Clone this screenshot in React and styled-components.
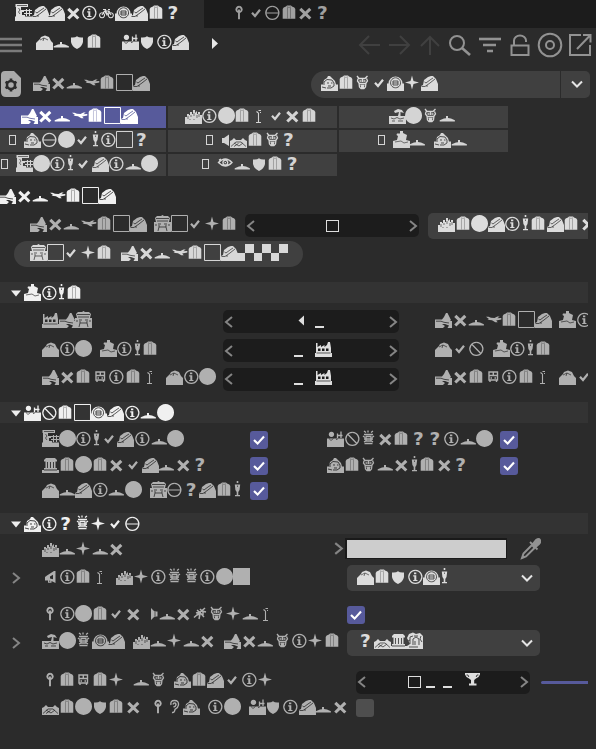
import React from 'react';
import styled, { createGlobalStyle } from 'styled-components';

const EM = 16.62;

// f: filled, s: stroked, k: lines cut out, kf: areas cut out, w: advance
const GLYPHS = {
  A: { f: 'M0.5 0H13V3H6V6H9V8H7V11H10V12.5H17V17H0V12.5H1V3H0.5Z', s: 'M9 6.5H17M9 9.5H17M11.5 5V12M14.5 5V12', k: 'M2 1.5H12M3.5 4L5 6L3.5 8L5 10' },
  B: { f: 'M0 6L2 2L6 0.5L9 2L13 1L16 4V17H0V14L3 12Z', k: 'M3 12V5L6 4M6 13V7L9 5L12 7V13M14 4L13 7L15 10M8 9V13M1 9L3 8M7 4H11M2 15H11', kw: 0.9 },
  C: { f: 'M0 10H2V7H4V8H5V5H7V7H8V3H10V6L12 4V7H13V5H15V8H17V17H0Z', k: 'M3 9V12M6 8V10M9 6V9M12 8V11M14 7V10M5 12V13M9 12V13' },
  D: { f: 'M0 10.5H2L3 6L6 4L7 2H9L12 5L14 7L15 10.5H17V17H0Z', k: 'M3 11V8L6 5.5L11 6L13 9V12L10 14H6M6 9H8M10 9H11.5M7 12H10M1 13L5 14', kw: 0.9 },
  E: { f: 'M0 8.5H17V17H0Z M4.4 1.7A2.7 2.7 0 1 0 4.5 1.7Z', s: 'M10.5 8V3.5M14 8V1.5M10.5 5.5H15.5', sw: 1.3, k: 'M2 8.5L4 10.5L6.5 8.5M9 9.5H10.5' },
  F: { f: 'M1 8V3H2.5V7L6 5V7L9.5 5V7L12 5L13 2H15L16 8V13H17V17H0V13H1Z', kf: 'M3 8.5H5.5V11H3ZM7 8.5H9.5V11H7ZM11 8.5H13.5V11H11Z', k: 'M1.5 13H15.5' },
  G: { f: 'M2 4L4 2H13L15 4V5.5H13.5V12H15V14H17V17H0V14H2V12H3.5V5.5H2Z', k: 'M5.5 6V12M8.5 6V12M11.5 6V12M2 14H15', kw: 0.9 },
  I: { f: 'M0 9H9L10 5L6 6L5 4L9 2L13 3L15 6L11.5 5V9H17V17H0Z', k: 'M2 11L5 12L8 10.5L11 12L15 11M3 14H6M9 14H14', kw: 0.8 },
  L: { s: 'M8 2.8A2.7 2.7 0 1 0 8.1 2.8M8 5.5V15.3', sw: 1.9 },
  M: { f: 'M0 10L4 6L5 4L9 2.5L13 4L15 8L17 10V17H0Z', k: 'M4 7L8 5L12 7M8 5L7 8' },
  N: { s: 'M1.5 7.5Q8.3 0.5 15 7.5Q8.3 14.5 1.5 7.5ZM8.3 5.2A2.4 2.4 0 1 0 8.4 5.2M8.3 7V8.2M2 5L4 4', sw: 1.4 },
  O: { s: 'M5 7Q4 2.5 8.5 2.5Q13 2.5 12.5 7Q12 10 9 11.5Q8.5 15 6 14.5M7 6.5Q7.5 4.5 9.5 5.2Q10.7 6.5 9 8.5L7.5 9', sw: 1.4 },
  P: { f: 'M0 8.5H7L9 6L11 2H12.5L16 9L15 10H17V17H12.5L14 14.5L10 13H7L10 15L8 17H0Z', k: 'M1 10.2H6L9 11.3L14 12', kw: 0.8 },
  R: { f: 'M0 10L2 9L4 7L6 9H11L13 7L15 9L17 10V17H0Z', k: 'M1 15.5L6 11H11L16 15.5M4 12L9 15L13 12M4 15.5L8.5 12.5', kw: 0.8 },
  S: { f: 'M3 1L7 1L8.5 0L10 1L14 1L16 3L15 7H17V17H0V7H2L1 3Z', k: 'M2 3.5H15M3 6H14M5 8V12L4 16M12 8V12L13 16M5 12H12M6 9H7M10 9H11M1 10H3M14 10H16', kw: 0.8 },
  T: { f: 'M4 2.5H7V0H10V2L14 4L13 9L17 10V17H0V10L4 9L5 5L3.5 4Z', k: 'M2 11L8 10L11 12L15 11' },
  V: { f: 'M3 9L5 7.5L12 3H13.5V15L9.5 13V14.7H6V12.5H3Z', kf: 'M8 8.6L11 6.8V11.2L8 10.4Z', k: 'M7.7 12.5V14' },
  W: { f: 'M1 3L4.5 6.5H7.5V11.5H4.5L1 15Z', k: 'M5 7V11', w: 9 },
  X: { f: 'M1 7H3L8 3.5V15L3 12H1Z', w: 9 },
  a: { s: 'M4 8.8L7 12L12 5.8', sw: 2.2 },
  b: { s: 'M4 8.8A2.5 2.5 0 1 0 4.1 8.8M12.8 8.8A2.5 2.5 0 1 0 12.9 8.8M4 11L6.5 7H11L13 11M6.5 7L9 11L11 7M5 5.5H7.5L9 11M10 5.5H12' },
  c: { s: 'M0.5 0.5H16.5V16.5H0.5Z', sw: 1 },
  d: { f: 'M2 4.5Q6 5 8 3.2Q10 5 14 4.5V9Q13 14 8 16Q3 14 2 9Z' },
  e: { f: 'M1.7 14.7V5Q2 3 5 2.5L6 1.5H10L11 2.5Q14 3 14.3 5V14.7Z', k: 'M6.5 3.5V14.5M9.5 3.5V14.5M6 2.7L8 3.5L10 2.7', kw: 0.35 },
  f: { s: 'M3 2L5 4.5H11L13.5 2M4 4.5L3.5 7L5 9L5.5 13L7 14.5H10L11.5 13L12 9L13.5 7L12.5 4.5M5.5 7H7.5M9.5 7H11.5M5 9.5H12M6.5 11.5H10.5M8.5 5V8M7 13H10', sw: 1.3 },
  g: { f: 'M0 0H17V17H0Z' },
  i: { s: 'M8.3 2.4A6.5 6.5 0 1 0 8.4 2.4', f: 'M6.2 7.3H9.3V12H10.5V13.1H6.2V12H7.3V8.4H6.2Z M7 4.4H9.3V6.3H7Z', sw: 1.25 },
  j: { f: 'M1 5.7L3.5 5.7L6 6.8L9.5 7L12.5 5.5H14.7L12.3 7.2L16.3 7V8.6L11.2 9.4L12.7 11.3H10.3L7 9.2L2.5 8.8L4 8Z' },
  k: { s: 'M2 12.5L6 9L13 3M5 5L8 7.5L12 12M4 8L8 7M8 4L10 6L14 7M7 14L8 9L5 10M11 6V10', sw: 1.5 },
  l: { f: 'M8 1.5L9.5 7L15 8.5L9.5 10L8 15.5L6.5 10L1 8.5L6.5 7Z' },
  m: { f: 'M3.7 0H5.3V2H3.7ZM1.8 3.5H7.2L6.5 9L5.3 11V14H7V15.3H2V14H3.7V11L2.4 9Z', k: 'M4.5 4.5V6', w: 9 },
  n: { f: 'M8.5 0A8.5 8.5 0 1 0 8.6 0Z' },
  o: { f: 'M0.7 14.4V13.3L5 11.6L7 11.3V9H9V11L12 11.6L15.9 13.3V14.4Z' },
  p: { s: 'M4 1L6 2.5M8 0.5V2.5M13 1L11 2.5M4 4.5H13M5.5 6.5H11.5M4 9H13M5.5 11H11.5M4.5 13.5H12.5M3 6L5 7.5M14 6L12 7.5M4 12L5.5 11M13 12L11.5 11M6 7V11M11 7V11', sw: 1.3 },
  r: { s: 'M3.3 4.8L13.3 14.5M13.3 4.8L3.3 14.5', sw: 3.1 },
  t: { f: 'M0 17V12L2 11L3 6L7 3L10 2H12L15 5L17 10V17Z', k: 'M0.5 12.5H4L9 9L14 5M3.5 8L5 9L9 6L12 4M5 12H7', kw: 0.8 },
  u: { f: 'M0 9.5H1.5A7 7 0 0 1 15.5 9.5H17V17H0Z', k: 'M8.5 3.8A5 5 0 1 0 8.6 3.8M6 7H11V11H6ZM6 9H11', kw: 0.9 },
  v: { s: 'M4 4H12.5V12H4ZM4 7.5H12.5M8.3 4V7.5M5.5 10H7M9.5 10H11M5 12V14M11.5 12V14', sw: 1.4 },
  w: { s: 'M7.5 6V15M5 15.5H10M5.5 4.5L7.5 6M7.5 3.5H10M9 5.5H10' },
  x: { s: 'M8.3 2.4A6.5 6.5 0 1 0 8.4 2.4M3.8 4.2L12.8 13.5', sw: 1.25 },
  y: { s: 'M8.3 2.4A6.5 6.5 0 1 0 8.4 2.4M2 9H14.8', sw: 1.25 },
  '0': { f: 'M4 15H13V17H4Z' },
  '1': { s: 'M2.5 5.5H14.5V16.5H2.5Z', sw: 1.3, crisp: true },
  '3': { f: 'M10 4.5V14.5L4.5 9.5Z' },
  '%': { f: 'M1 2H16V3.5L14.5 6L12 7.5L10.2 9V12.5H12.5V14.5H5V12.5H7V9L5 7.5L2.5 6L1 3.5Z', k: 'M2.5 4H4L4.8 6M14.5 4H13L12.2 6', kw: 0.8 },
  '.': { f: 'M0 8.5H8.5V17H0ZM8.5 0H17V8.5H8.5Z', crisp: true },
  '|': { s: 'M1.5 4.5H7.5V13.5H1.5Z', sw: 1, w: 8, crisp: true },
};

const Glyph = ({ ch }) => {
  if (ch === ' ') return <Space />;
  if (ch === 's') return <Mark>?</Mark>;
  const g = GLYPHS[ch];
  return (
    <Sign $w={g.w || EM} viewBox={`0 0 ${g.w || EM} 17`} shapeRendering={g.crisp ? 'crispEdges' : undefined}>
      {g.f && <path d={g.f} fill='currentColor' />}
      {g.s && <path d={g.s} fill='none' stroke='currentColor' strokeWidth={g.sw || 1.1} />}
      {g.kf && <path d={g.kf} fill='var(--cut)' />}
      {g.k && <path d={g.k} fill='none' stroke='var(--cut)' strokeWidth={g.kw || 0.7} />}
    </Sign>
  );
};

const Word = ({ text, ...rest }) => (
  <WordWrap {...rest}>
    {text.split('').map((ch, i) => <Glyph ch={ch} key={i} />)}
  </WordWrap>
);

const Chevron = ({ dir = 'right', size = 12, color = '#858585', weight = 2 }) => {
  const d = { right: 'M3 1L9 6L3 11', left: 'M9 1L3 6L9 11', down: 'M1 3.5L6 8.5L11 3.5' }[dir];
  return (
    <svg width={size} height={size} viewBox='0 0 12 12'>
      <path d={d} fill='none' stroke={color} strokeWidth={weight} />
    </svg>
  );
};

const NumberField = ({ text, width }) => (
  <Field $w={width}>
    <Chevron dir='left' />
    <Word text={text} />
    <Chevron />
  </Field>
);

const Check = ({ on }) => (
  <CheckBox $on={on}>
    {on && (
      <svg width='14' height='14' viewBox='0 0 14 14'>
        <path d='M2 7L5.6 10.6L12 3.5' fill='none' stroke='#fff' strokeWidth='2.1' />
      </svg>
    )}
  </CheckBox>
);

const Section = ({ text }) => (
  <SectionBar>
    <svg width='10' height='9' viewBox='0 0 10 9'><path d='M0 2.5H10L5 8.5Z' fill='#eee' /></svg>
    <Word text={text} $lift={1} />
  </SectionBar>
);

const Toolbar = () => (
  <Tools>
    <svg width='240' height='28' viewBox='0 0 240 28' fill='none' stroke='#929292' strokeWidth='2'>
      <g stroke='#404040'>
        <path d='M24 14H4M13 5L4 14L13 23' />
        <path d='M33 14H53M44 5L53 14L44 23' />
        <path d='M74 24V6M65 15L74 6L83 15' />
      </g>
      <circle cx='101' cy='12' r='7' />
      <path d='M106 17L114 24' strokeWidth='2.6' />
      <path d='M123 8H145' strokeWidth='2.6' /><path d='M127 14H140M131 20H137' strokeWidth='2.4' />
      <path d='M155.5 14.5H172.5V24H155.5ZM158 14V9.5A6 5 0 0 1 170 9.5V11' />
      <circle cx='194' cy='14' r='11.3' />
      <circle cx='194' cy='14' r='4' />
      <path d='M225 4H214V24H234V14M227 4H234.5V11.5M234 4.5L221 18' />
    </svg>
  </Tools>
);

const App = () => (
  <>
    <GlobalStyle />
    <Panel>
      <TabBar>
        <PanelTab $w={204} $active><Word text='Attributes' $lift={3} /></PanelTab>
        <PanelTab $w={392}><Word text='Layers' $lift={3} /></PanelTab>
      </TabBar>
      <MenuBar>
        <svg width='22' height='16' viewBox='0 0 22 16'>
          <path d='M0 2H22M0 8H22M0 14H22' stroke='#7b7b7b' strokeWidth='2.4' />
        </svg>
        <MenuItem $left={14}><Word text='Mode' $lift={8} /></MenuItem>
        <MenuItem $left={20}><Word text='Edit' $lift={8} /></MenuItem>
        <MenuItem $left={23}><MenuArrow width='6' height='11' viewBox='0 0 6 11'><path d='M0 0L6 5.5L0 11Z' fill='#e8e8e8' /></MenuArrow></MenuItem>
        <Toolbar />
      </MenuBar>
      <ObjectBar>
        <svg width='22' height='28' viewBox='0 0 22 28'>
          <path d='M5 1H14L21 8V22Q21 27 16 27H6Q1 27 1 22V5Q1 1 5 1Z' fill='#aaa' />
          <circle cx='11' cy='15' r='4' fill='none' stroke='#2b2b2b' strokeWidth='2.5' />
          <path d='M11 8.5V11M11 19V21.5M5.5 11.8L7.6 13M14.4 17L16.5 18.2M5.5 18.2L7.6 17M14.4 13L16.5 11.8' stroke='#2b2b2b' strokeWidth='2.6' />
        </svg>
        <ObjectName><Word text='Project' $lift={4} /></ObjectName>
        <Preset><Word text='Default' $lift={4} /></Preset>
        <PresetArrow><Chevron dir='down' color='#e4e4e4' /></PresetArrow>
      </ObjectBar>
      <Categories>
        <Category $active><Word text='Project' $lift={4} /></Category>
        <Category><Word text='Cineware' $lift={4} /></Category>
        <Category><Word text='Info' $lift={4} /></Category>
        <Category><Word text='| Dynamics' $lift={4} /></Category>
        <Category><Word text='| XRefs' $lift={4} /></Category>
        <Category><Word text='| To Do' $lift={4} /></Category>
        <Category><Word text='| Animation' $lift={4} /></Category>
        <Category><Word text='| Nodes' $lift={4} /></Category>
      </Categories>
      <Scroller>
        <Heading><Word text='Project' /></Heading>
        <Row $h={31} $left={30}>
          <Label $w={215}><Word text='Project Scale' /></Label>
          <NumberField width={174} text='1' />
          <UnitSelect><Word text='Centimeter' /></UnitSelect>
        </Row>
        <PillButton><Word text='Scale Project...' $lift={4} /></PillButton>

        <Section text='Time' />
        <Group $after={9}>
          <Row $h={29}>
            <Label $w={181}><Word text='FPS' /></Label>
            <NumberField width={176} text='30' />
            <Label $left={36}><Word text='Project Time' /></Label>
          </Row>
          <Row $h={29}>
            <Label $w={181}><Word text='Min Time' /></Label>
            <NumberField width={176} text='0 F' />
            <Label $left={36}><Word text='Max Time' /></Label>
          </Row>
          <Row $h={28}>
            <Label $w={181}><Word text='Preview Min' /></Label>
            <NumberField width={176} text='0 F' />
            <Label $left={36}><Word text='Preview Max' /></Label>
          </Row>
        </Group>

        <Section text='Execution' />
        <Group $after={9}>
          <Row $h={26}>
            <Label $w={208}><Word text='Animation' $lift={3} /></Label>
            <Check on />
            <Label $w={173} $left={59}><Word text='Expression' $lift={3} /></Label>
            <Check on />
          </Row>
          <Row $h={25}>
            <Label $w={208}><Word text='Generators' $lift={3} /></Label>
            <Check on />
            <Label $w={173} $left={59}><Word text='Deformers' $lift={3} /></Label>
            <Check on />
          </Row>
          <Row $h={26}>
            <Label $w={208}><Word text='Motion System' $lift={3} /></Label>
            <Check on />
          </Row>
        </Group>

        <Section text='Display' />
        <Row $h={29}>
          <Label $w={290}><Word text='Color' $lift={0} /></Label>
          <Chevron size={13} />
          <Swatch />
          <Dropper width='21' height='22' viewBox='0 0 21 22'>
            <path d='M12 7L3.5 15.5L2 20L6 18.5L14.5 10' fill='none' stroke='#929292' strokeWidth='2' />
            <path d='M10 4L17.5 11.5M12 7L16 2Q19 0 20 2Q21 4 19 6L14.5 10Z' fill='#929292' stroke='#929292' strokeWidth='1.8' />
          </Dropper>
        </Row>
        <Row $h={30} $left={10}>
          <Chevron />
          <Label $w={305} $left={20}><Word text='View Clipping' $lift={3} /></Label>
          <Select><Word text='Medium' $lift={4} /><Chevron dir='down' color='#e4e4e4' /></Select>
        </Row>
        <Row $h={28} $before={8}>
          <Label $w={305}><Word text='Linear Workflow' $lift={3} /></Label>
          <Check on />
        </Row>
        <Row $h={28} $left={10}>
          <Chevron />
          <Label $w={305} $left={20}><Word text='Input Color Profile' /></Label>
          <Select><Word text='sRGB' /><Chevron dir='down' color='#e4e4e4' /></Select>
        </Row>
        <Row $h={28} $before={11}>
          <Label $w={314}><Word text='Level of Detail' /></Label>
          <NumberField width={174} text='100 %' />
          <Track />
        </Row>
        <Row $h={24}>
          <Label $w={314}><Word text='Render LOD in Editor' $lift={3} /></Label>
          <Check />
        </Row>
      </Scroller>
    </Panel>
  </>
);

export default App;

const GlobalStyle = createGlobalStyle`
  * {
    box-sizing: border-box;
  }
  body {
    margin: 0;
    background: #2b2b2b;
    overflow: hidden;
  }
  svg {
    display: block;
    flex: none;
  }
`;
const Panel = styled.div`
  --cut: #2b2b2b;
  width: 596px;
  height: 749px;
  overflow: hidden;
  background: #2b2b2b;
  color: #b0b0b0;
  font-family: 'Liberation Sans', Arial, sans-serif;
`;
const WordWrap = styled.span`
  display: flex;
  flex: none;
  box-sizing: content-box;
  height: 17px;
  padding-bottom: ${props => props.$lift ?? 5}px;
`;
const Sign = styled.svg`
  width: ${props => props.$w}px;
  height: 17px;
  overflow: visible;
`;
const Space = styled.span`
  width: 8px;
`;
const Mark = styled.span`
  width: ${EM}px;
  height: 17px;
  text-align: center;
  font: bold 18.5px/18px 'DejaVu Sans', sans-serif;
`;
const TabBar = styled.div`
  display: flex;
  height: 28px;
`;
const PanelTab = styled.div`
  --cut: ${props => props.$active ? '#2b2b2b' : '#1c1c1c'};
  display: flex;
  align-items: center;
  width: ${props => props.$w}px;
  padding-left: ${props => props.$active ? '15px' : '27px'};
  background: ${props => props.$active ? '#2b2b2b' : '#1c1c1c'};
  color: ${props => props.$active ? '#e0e0e0' : '#a0a0a0'};
`;
const MenuBar = styled.div`
  display: flex;
  align-items: center;
  height: 34px;
  color: #dcdcdc;
`;
const MenuItem = styled.div`
  margin-left: ${props => props.$left}px;
`;
const MenuArrow = styled.svg`
  margin-bottom: 3px;
`;
const Tools = styled.div`
  margin-left: auto;
`;
const ObjectBar = styled.div`
  display: flex;
  align-items: center;
  height: 44px;
`;
const ObjectName = styled.div`
  width: 289px;
  padding-left: 11px;
`;
const Preset = styled.div`
  --cut: #404040;
  display: flex;
  align-items: center;
  width: 249px;
  height: 27px;
  padding-left: 10px;
  border-radius: 14px 0 0 14px;
  background: #404040;
  color: #dcdcdc;
`;
const PresetArrow = styled.div`
  display: flex;
  align-items: center;
  justify-content: center;
  width: 29px;
  height: 27px;
  margin-left: 1px;
  padding-left: 2px;
  border-radius: 0 5px 5px 0;
  background: #404040;
`;
const Categories = styled.div`
  display: grid;
  grid-template-columns: 166px 169px 169px;
  grid-auto-rows: 22px;
  gap: 2px;
`;
const Category = styled.div`
  --cut: ${props => props.$active ? '#575a9b' : '#404040'};
  display: flex;
  align-items: center;
  justify-content: center;
  padding-right: 3px;
  background: ${props => props.$active ? '#575a9b' : '#404040'};
  color: ${props => props.$active ? '#fff' : '#d4d4d4'};
  &:nth-child(3n + 1) {
    padding-right: 8px;
  }
`;
const Scroller = styled.div`
  width: 588px;
  overflow: hidden;
`;
const Heading = styled.div`
  height: 34px;
  padding-top: 11px;
  margin-left: -1px;
  color: #f0f0f0;
`;
const Row = styled.div`
  display: flex;
  align-items: center;
  height: ${props => props.$h}px;
  margin-top: ${props => props.$before || 0}px;
  padding-left: ${props => props.$left ?? 42}px;
`;
const Group = styled.div`
  padding: 4px 0 ${props => props.$after}px;
`;
const Label = styled.div`
  flex: none;
  width: ${props => props.$w ? `${props.$w}px` : 'auto'};
  margin-left: ${props => props.$left || 0}px;
`;
const Field = styled.div`
  --cut: #1c1c1c;
  display: flex;
  flex: none;
  align-items: center;
  justify-content: space-between;
  width: ${props => props.$w}px;
  height: 23px;
  border-radius: 5px;
  background: #1c1c1c;
  color: #dedede;
`;
const UnitSelect = styled.div`
  --cut: #404040;
  display: flex;
  flex: none;
  align-items: center;
  width: 160px;
  height: 26px;
  margin-left: 9px;
  padding-left: 10px;
  border-radius: 5px 0 0 5px;
  overflow: hidden;
  background: #404040;
  color: #dcdcdc;
`;
const PillButton = styled.div`
  --cut: #404040;
  display: flex;
  align-items: center;
  width: 289px;
  height: 26px;
  margin: 0 0 15px 14px;
  padding-left: 16px;
  border-radius: 13px;
  background: #404040;
  color: #d8d8d8;
`;
const SectionBar = styled.div`
  --cut: #333;
  display: flex;
  align-items: center;
  gap: 3px;
  height: 21px;
  padding-left: 11px;
  background: #333;
  color: #f0f0f0;
`;
const CheckBox = styled.div`
  display: flex;
  flex: none;
  align-items: center;
  justify-content: center;
  width: 18px;
  height: 18px;
  border-radius: 3px;
  background: ${props => props.$on ? '#575a9b' : '#4e4e4e'};
`;
const Swatch = styled.div`
  width: 162px;
  height: 21px;
  border: solid #1a1a1a;
  border-width: 2px 1px 1px 2px;
  background: #cdcdcd;
`;
const Dropper = styled.svg`
  margin-left: 13px;
`;
const Select = styled.div`
  --cut: #404040;
  display: flex;
  flex: none;
  align-items: center;
  justify-content: space-between;
  width: 193px;
  height: 26px;
  padding: 0 7px 0 10px;
  border-radius: 5px;
  background: #404040;
  color: #dcdcdc;
`;
const Track = styled.div`
  width: 48px;
  height: 3px;
  margin-left: 11px;
  border-radius: 2px 0 0 2px;
  background: #575a9b;
`;
